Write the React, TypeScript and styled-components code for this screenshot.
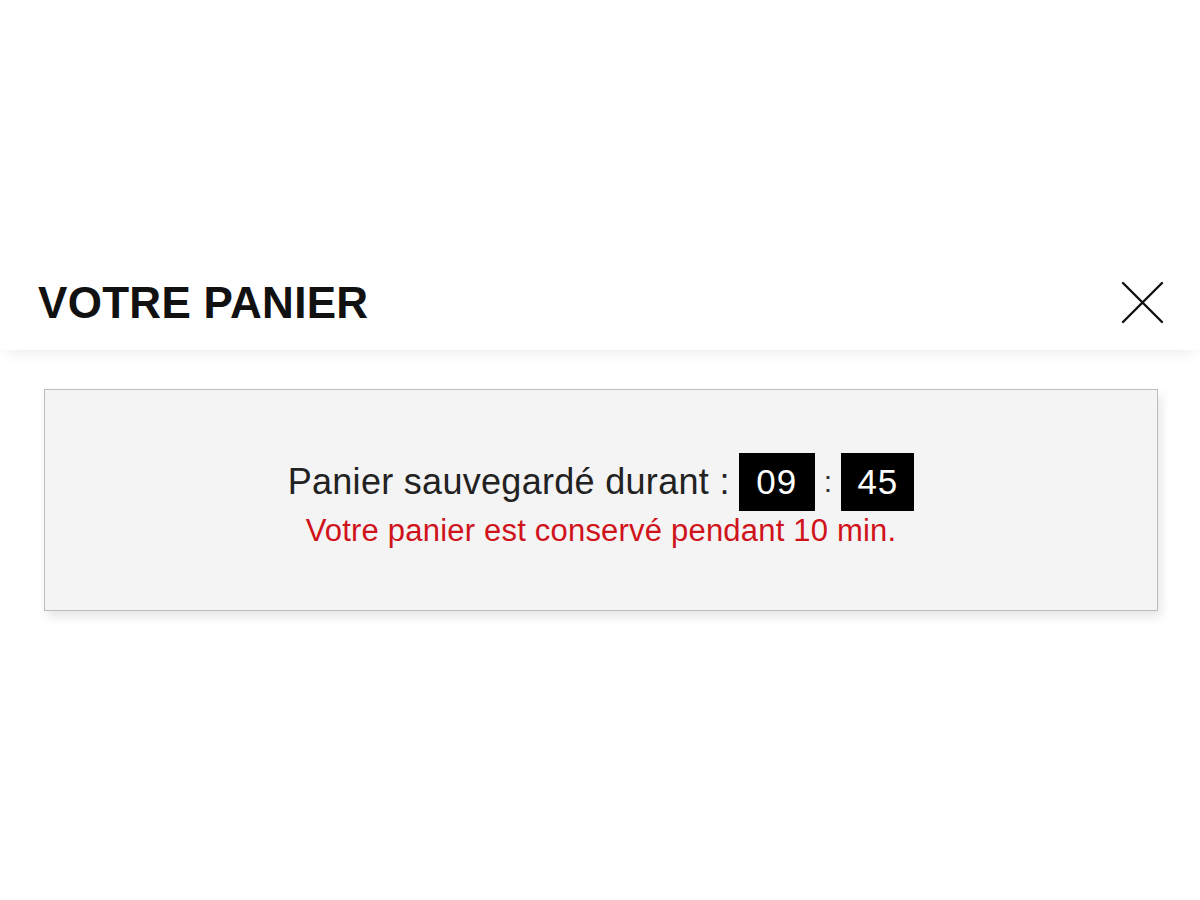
import styled, { createGlobalStyle } from "styled-components";

const GlobalStyle = createGlobalStyle`
  html, body {
    margin: 0;
    padding: 0;
    background: #ffffff;
    font-family: "Liberation Sans", Arial, sans-serif;
  }
`;

const Page = styled.div`
  width: 1200px;
  height: 900px;
  overflow: hidden;
  display: flex;
  flex-direction: column;
  padding-top: 255px;
  box-sizing: border-box;
`;

const Header = styled.header`
  height: 95px;
  display: flex;
  align-items: center;
  justify-content: space-between;
  padding: 0 35px 0 38px;
  background: #ffffff;
  box-shadow: 0 9px 14px -6px rgba(0, 0, 0, 0.08);
  position: relative;
  z-index: 1;
`;

const Title = styled.h1`
  margin: 0;
  font-size: 44px;
  font-weight: 700;
  color: #111111;
  letter-spacing: 0.3px;
`;

const CloseButton = styled.button`
  width: 44px;
  height: 44px;
  padding: 0;
  border: none;
  background: none;
  cursor: pointer;
  display: flex;
  align-items: center;
  justify-content: center;
`;

const Body = styled.main`
  flex: 1;
  padding: 39px 42px 0 44px;
`;

const TimerCard = styled.section`
  height: 222px;
  box-sizing: border-box;
  background: #f4f4f4;
  border: 1.5px solid #bdbdbd;
  box-shadow: 3px 6px 10px rgba(0, 0, 0, 0.1);
  display: flex;
  flex-direction: column;
  align-items: center;
  justify-content: center;
  gap: 2px;
  padding-top: 2px;
`;

const TimerRow = styled.div`
  display: flex;
  align-items: center;
  gap: 9px;
  font-size: 36px;
  color: #222222;
  letter-spacing: 0.3px;
`;

const Digits = styled.span<{ $width: number }>`
  width: ${(p) => p.$width}px;
  height: 58px;
  background: #000000;
  color: #ffffff;
  display: flex;
  align-items: center;
  justify-content: center;
  font-size: 35px;
  letter-spacing: 1px;
`;

const Colon = styled.span`
  font-size: 30px;
  color: #333333;
  margin: 0 0px;
`;

const Notice = styled.p`
  margin: 0;
  font-size: 31px;
  color: #d0121b;
  letter-spacing: 0.2px;
`;

function CloseIcon() {
  return (
    <svg width="44" height="44" viewBox="0 0 44 44" fill="none">
      <path d="M2 2 L41 41 M41 2 L2 41" stroke="#111111" strokeWidth="2.4" strokeLinecap="round" />
    </svg>
  );
}

export default function App() {
  return (
    <>
      <GlobalStyle />
      <Page>
        <Header>
          <Title>VOTRE PANIER</Title>
          <CloseButton aria-label="Fermer">
            <CloseIcon />
          </CloseButton>
        </Header>
        <Body>
          <TimerCard>
            <TimerRow>
              <span>Panier sauvegardé durant :</span>
              <Digits $width={76}>09</Digits>
              <Colon>:</Colon>
              <Digits $width={73}>45</Digits>
            </TimerRow>
            <Notice>Votre panier est conservé pendant 10 min.</Notice>
          </TimerCard>
        </Body>
      </Page>
    </>
  );
}
